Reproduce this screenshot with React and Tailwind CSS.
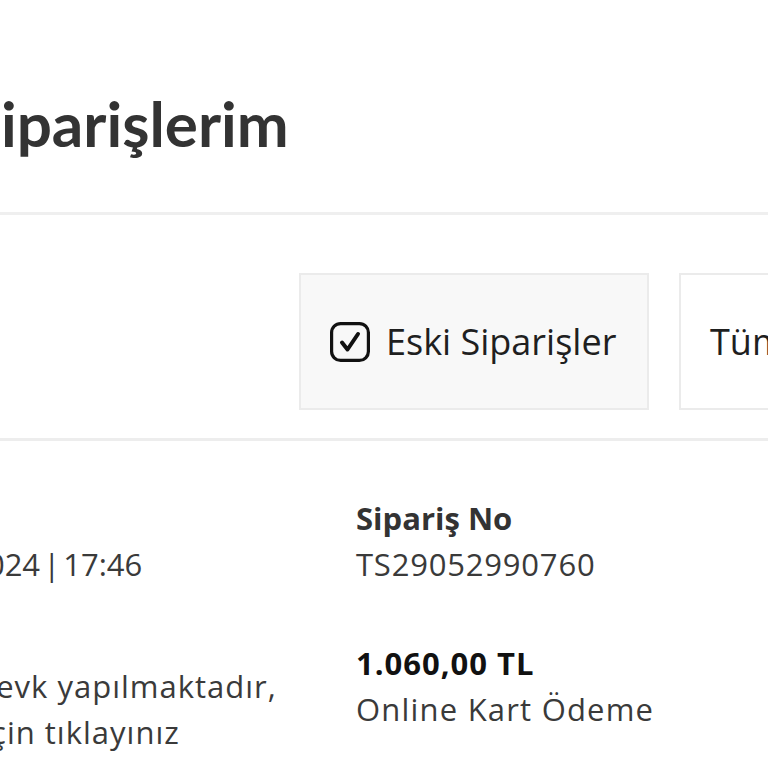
import React from "react";

function CheckIcon() {
  return (
    <svg width="40" height="40" viewBox="0 0 40 40" fill="none" className="shrink-0">
      <rect x="1.6" y="1.6" width="36.8" height="36.8" rx="9" stroke="#111" strokeWidth="3.2" />
      <path d="M12 20.5 L17.5 27.5 L28 12" stroke="#111" strokeWidth="4" strokeLinecap="round" strokeLinejoin="round" />
    </svg>
  );
}

export default function App() {
  return (
    <div className="w-[768px] h-[768px] overflow-hidden bg-white font-['Open_Sans','Noto_Sans',sans-serif] text-[#333]">
      <div className="w-[1200px]">
        {/* Header */}
        <div className="border-b-[3px] border-[#efefef] pt-[84px] pb-[50px]">
          <h1 className="-ml-[33px] font-['Lato',sans-serif] text-[62px] leading-[78px] font-bold text-[#333]">
            Siparişlerim
          </h1>
        </div>

        {/* Filters */}
        <div className="border-b-[3px] border-[#ededed] pt-[58px] pb-[28px]">
          <div className="flex gap-[30px] pl-[299px]">
            <button className="flex items-center gap-[16px] w-[350px] h-[137px] pl-[29px] bg-[#f8f8f8] border-2 border-[#ebebeb] text-[36px] text-[#1f1f1f] font-medium">
              <CheckIcon />
              <span>Eski Siparişler</span>
            </button>
            <button className="flex items-center w-[350px] h-[137px] pl-[29px] bg-white border-2 border-[#ebebeb] text-[36px] text-[#1f1f1f] font-medium">
              <span>Tüm Siparişler</span>
            </button>
          </div>
        </div>

        {/* Order info */}
        <div className="grid grid-cols-[474px_1fr] -ml-[118px] pt-[54px]">
          <div className="flex flex-col">
            <div className="text-[31px] leading-[46px] font-bold text-[#333]">Tarih</div>
            <div className="text-[31px] leading-[46px] font-normal text-[#3a3a3a] [word-spacing:-5px]">29.05.2024 | 17:46</div>
            <div className="mt-[76px] text-[31px] leading-[46px] font-normal text-[#3a3a3a] whitespace-nowrap tracking-[1px]">
              <div>Kargo sevk yapılmaktadır,</div>
              <div>Takibi için tıklayınız</div>
            </div>
          </div>
          <div className="flex flex-col">
            <div className="text-[31px] leading-[46px] font-bold text-[#333]">Sipariş No</div>
            <div className="text-[31px] leading-[46px] font-normal text-[#3a3a3a] tracking-[0.8px]">TS29052990760</div>
            <div className="mt-[53px] text-[31px] leading-[46px] font-bold text-[#111] tracking-[1px]">1.060,00 TL</div>
            <div className="text-[31px] leading-[46px] font-normal text-[#3a3a3a] tracking-[1.2px]">Online Kart Ödeme</div>
          </div>
        </div>
      </div>
    </div>
  );
}
